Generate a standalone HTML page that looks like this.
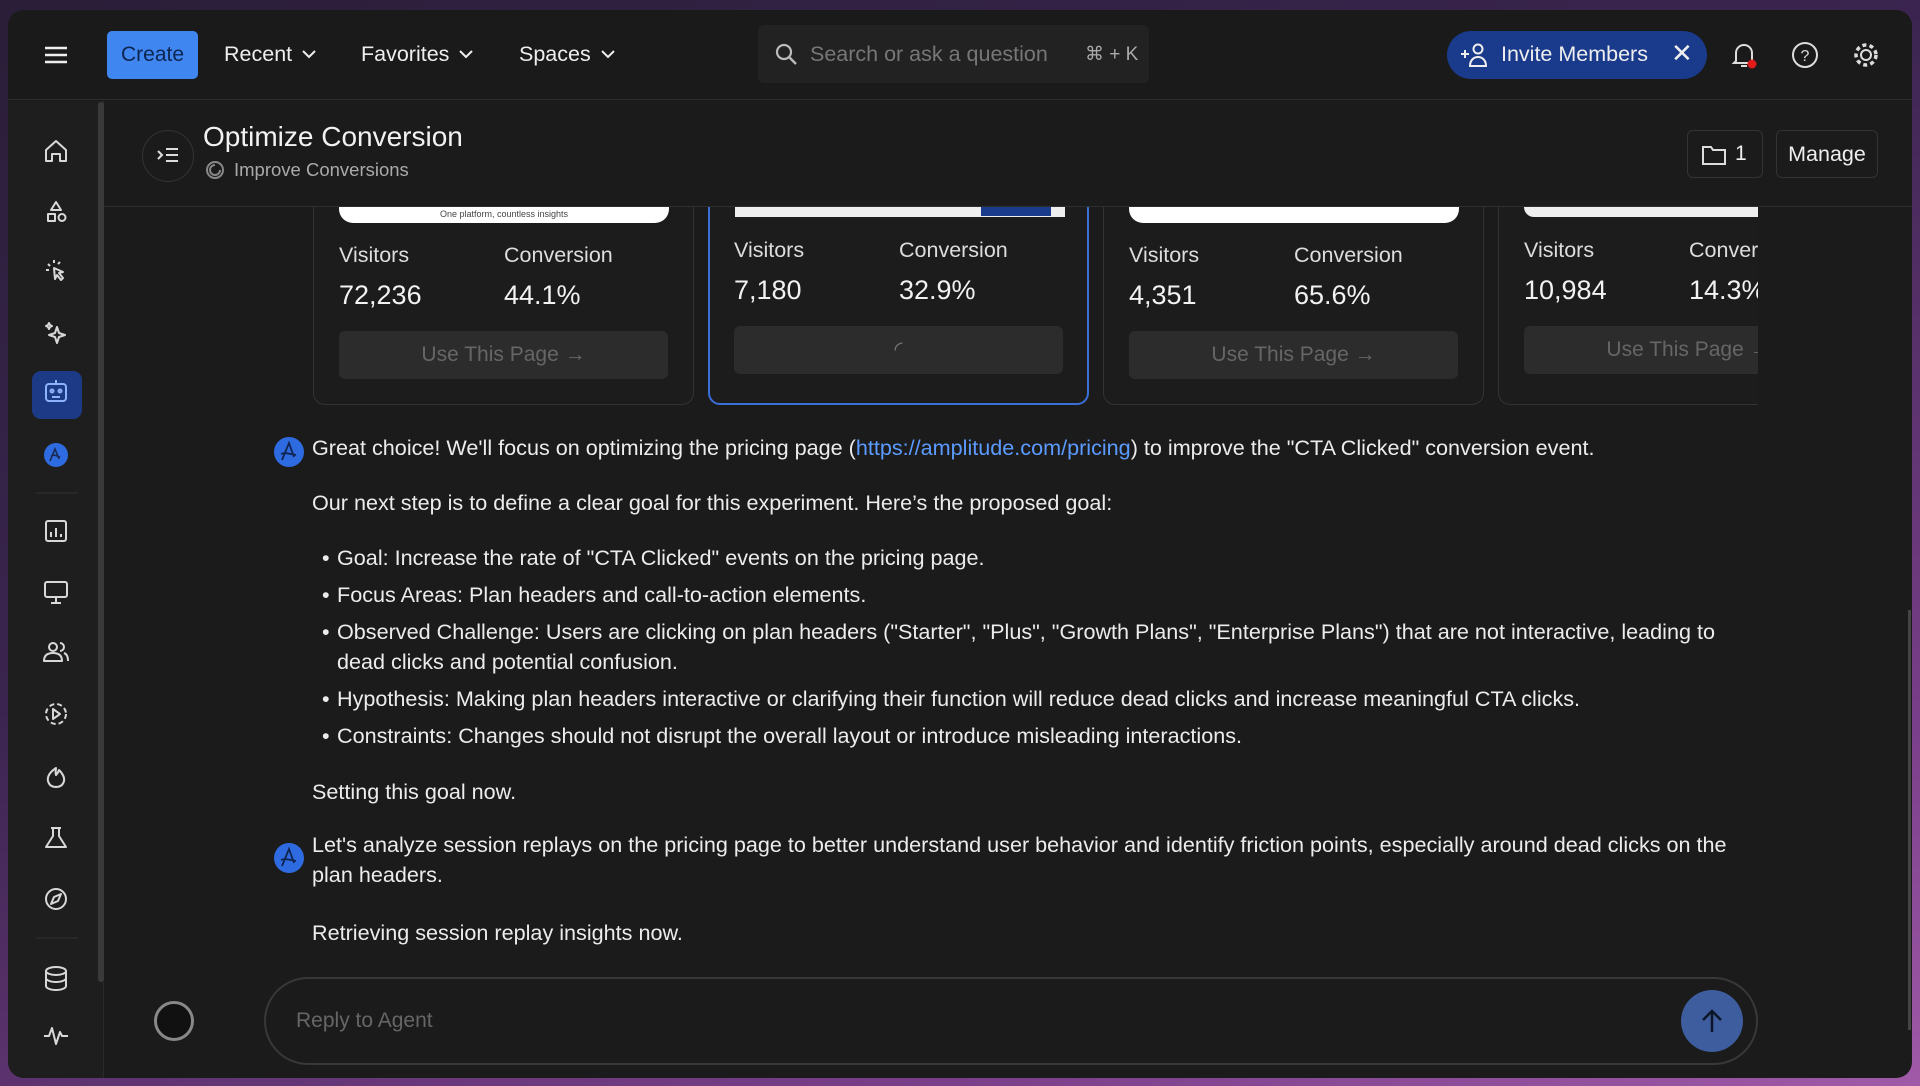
<!DOCTYPE html>
<html><head><meta charset="utf-8"><style>
*{box-sizing:border-box;margin:0;padding:0}
body{width:1920px;height:1086px;overflow:hidden;background:linear-gradient(160deg,#2a1e38 0%,#3b2550 40%,#7a3f8a 80%,#a05aa8 100%);font-family:"Liberation Sans",sans-serif;color:#e8e8e8;position:relative}
.win{position:absolute;left:8px;top:10px;width:1904px;height:1068px;background:#1b1b1b;border-radius:16px;overflow:hidden}
.a{position:absolute}
.top{left:0;top:0;width:1904px;height:90px;border-bottom:1px solid #2c2c2c;background:#1a1a1a}
.nav{font-size:21.5px;color:#eee;top:32px;display:flex;align-items:center;gap:10px}
.side{left:0;top:91px;width:96px;height:977px;background:#1e1e1e;border-right:1px solid #2a2a2a}
svg{display:block}
.card{border:1px solid #333;border-radius:12px;background:#1c1c1c}
.lbl{font-size:21.5px;color:#ddd}
.num{font-size:27px;color:#f2f2f2}
.btn{background:#2c2c2c;border-radius:6px;color:#666;font-size:21px;text-align:center;line-height:48px;height:48px}
.msg{font-size:21.6px;color:#ececec;left:304px}
.av{width:30px;height:30px;border-radius:50%;background:#2f6be0;left:266px}
</style></head><body>
<div class="win">
<div class="a top"></div>
<svg class="a" style="left:36px;top:35px" width="24" height="20"><g stroke="#eee" stroke-width="2.5"><line x1="1" y1="3" x2="23" y2="3"/><line x1="1" y1="10" x2="23" y2="10"/><line x1="1" y1="17" x2="23" y2="17"/></g></svg>
<div class="a" style="left:99px;top:21px;width:91px;height:48px;background:#3f86f0;border-radius:5px;color:#0e2550;font-size:21px;line-height:48px;text-align:center">Create</div>
<div class="a nav" style="left:216px">Recent <svg width="14" height="9"><path d="M1 1l6 6 6-6" stroke="#eee" stroke-width="2" fill="none"/></svg></div>
<div class="a nav" style="left:353px">Favorites <svg width="14" height="9"><path d="M1 1l6 6 6-6" stroke="#eee" stroke-width="2" fill="none"/></svg></div>
<div class="a nav" style="left:511px">Spaces <svg width="14" height="9"><path d="M1 1l6 6 6-6" stroke="#eee" stroke-width="2" fill="none"/></svg></div>
<div class="a" style="left:750px;top:15px;width:391px;height:58px;background:#222;border-radius:6px"></div>
<svg class="a" style="left:766px;top:32px" width="24" height="24"><circle cx="10" cy="10" r="7" stroke="#bbb" stroke-width="2.2" fill="none"/><line x1="15" y1="15" x2="22" y2="22" stroke="#bbb" stroke-width="2.4"/></svg>
<div class="a" style="left:802px;top:32px;font-size:21.5px;color:#777">Search or ask a question</div>
<div class="a" style="left:1077px;top:33px;font-size:19px;color:#aaa">⌘ + K</div>
<div class="a" style="left:1439px;top:21px;width:260px;height:48px;background:#1a3a8c;border-radius:24px"></div>
<svg class="a" style="left:1451px;top:32px" width="30" height="26"><g stroke="#eee" stroke-width="2" fill="none"><line x1="2" y1="12" x2="10" y2="12"/><line x1="6" y1="8" x2="6" y2="16"/><circle cx="19" cy="7" r="4.5"/><path d="M11 24c0-6 4-9 8-9s8 3 8 9z"/></g></svg>
<div class="a" style="left:1493px;top:32px;font-size:21.5px;color:#eee">Invite Members</div>
<div class="a" style="left:1663px;top:28px;font-size:26px;color:#eee">✕</div>
<svg class="a" style="left:1722px;top:31px" width="28" height="30"><path d="M6 20V12a8 8 0 0116 0v8l2 2H4z M11 25h6" stroke="#ddd" stroke-width="2" fill="none"/><circle cx="22" cy="23" r="4.5" fill="#e01b1b"/></svg>
<svg class="a" style="left:1783px;top:31px" width="28" height="28"><circle cx="14" cy="14" r="12" stroke="#ddd" stroke-width="2" fill="none"/><text x="14" y="20" font-size="16" fill="#ddd" text-anchor="middle" font-family="Liberation Sans">?</text></svg>
<svg class="a" style="left:1844px;top:31px" width="28" height="28"><circle cx="14" cy="14" r="5" stroke="#ddd" stroke-width="2" fill="none"/><circle cx="14" cy="14" r="10" stroke="#ddd" stroke-width="3.5" stroke-dasharray="4 3.2" fill="none"/></svg>

<div class="a side"></div>
<div class="a" style="left:90px;top:92px;width:6px;height:880px;background:#3a3a3a;border-radius:3px"></div>
<div class="a" style="left:24px;top:361px;width:50px;height:48px;border-radius:9px;background:#1d3a86"></div>
<svg class="a" style="left:0;top:0" width="96" height="1068">
<g stroke="#d8d8d8" stroke-width="2" fill="none" stroke-linejoin="round">
<path d="M38 140l10-9 10 9v11h-6v-7h-8v7h-6z"/>
<path d="M48 192l5 8h-10z"/><rect x="40" y="204" width="7" height="7"/><circle cx="54" cy="207.5" r="3.5"/>
<path d="M46 258l9 4-4 1 4 5-2 2-4-5-2 4z"/><path d="M40 254l2 2M46 250v3M52 252l-2 2M38 260h3"/>
<path d="M49 317l2 6 6 2-6 2-2 6-2-6-6-2 6-2z"/><path d="M41 313l1 2 2 1-2 1-1 2-1-2-2-1 2-1z"/>
<rect x="38" y="374" width="20" height="17" rx="3" stroke="#8fb2ff"/><circle cx="44" cy="381" r="1.5" stroke="#8fb2ff"/><circle cx="52" cy="381" r="1.5" stroke="#8fb2ff"/><path d="M48 370v4M44 387h8" stroke="#8fb2ff"/>
<rect x="38" y="511" width="20" height="20" rx="2"/><path d="M43 527v-5M48 527v-9M53 527v-3"/>
<rect x="37" y="572" width="22" height="15" rx="2"/><path d="M48 587v5M43 593h10"/>
<circle cx="45" cy="637" r="4"/><path d="M36 651c0-6 4-8 9-8s9 2 9 8zM52 633a4 4 0 010 8M56 643c3 1 4 4 4 8"/>
<circle cx="48" cy="704" r="10" stroke-dasharray="5 3"/><path d="M45 699v10l7-5z"/>
<path d="M48 758c-6 4-9 8-8 13 1 4 4 6 8 6s7-2 8-6c1-5-3-9-5-11-1 3-2 4-3 5-1-3 0-5 0-7z"/>
<path d="M43 818h10M45 818v8l-7 11h20l-7-11v-8"/>
<circle cx="48" cy="889" r="10"/><path d="M53 884l-3 7-7 3 3-7z"/>
<ellipse cx="48" cy="961" rx="10" ry="4"/><path d="M38 961v15c0 2 4 4 10 4s10-2 10-4v-15M38 968c0 2 4 4 10 4s10-2 10-4"/>
<path d="M36 1026h5l3-8 4 16 4-12 2 4h6"/>
</g>
<line x1="28" y1="483" x2="70" y2="483" stroke="#333"/><line x1="28" y1="928" x2="70" y2="928" stroke="#333"/>
<circle cx="48" cy="445" r="12" fill="#2f6be0"/><path d="M42 451l5-12 4 10M43 446c3-2 6 0 9 1" stroke="#1a2a50" stroke-width="1.6" fill="none"/>
</svg>

<div class="a" style="left:96px;top:91px;width:1808px;height:106px;border-bottom:1px solid #2e2e2e;background:#1b1b1b;z-index:2"></div>
<div class="a" style="left:134px;top:120px;width:52px;height:52px;border-radius:50%;border:1px solid #333;z-index:3"></div>
<svg class="a" style="left:149px;top:136px;z-index:3" width="22" height="20"><g stroke="#ddd" stroke-width="2" fill="none"><path d="M1 5l4 4-4 4"/><line x1="9" y1="3" x2="21" y2="3"/><line x1="9" y1="9" x2="21" y2="9"/><line x1="9" y1="15" x2="21" y2="15"/></g></svg>
<div class="a" style="left:195px;top:111px;font-size:28px;color:#f2f2f2;z-index:3">Optimize Conversion</div>
<svg class="a" style="left:197px;top:150px;z-index:3" width="20" height="20"><circle cx="10" cy="10" r="8" stroke="#888" stroke-width="2" fill="none"/><path d="M10 5a5 5 0 105 5" stroke="#888" stroke-width="2" fill="none"/></svg>
<div class="a" style="left:226px;top:149px;font-size:18.5px;color:#aaa;z-index:3">Improve Conversions</div>
<div class="a" style="left:1679px;top:120px;width:76px;height:48px;border:1px solid #333;border-radius:6px;z-index:3"></div>
<svg class="a" style="left:1693px;top:134px;z-index:3" width="26" height="22"><path d="M2 3h8l2 3h12v14H2z" stroke="#ddd" stroke-width="2" fill="none"/></svg>
<div class="a" style="left:1727px;top:132px;font-size:21px;color:#eee;z-index:3">1</div>
<div class="a" style="left:1768px;top:120px;width:102px;height:48px;border:1px solid #333;border-radius:6px;font-size:21.5px;line-height:46px;text-align:center;color:#eee;z-index:3">Manage</div>

<!-- cards -->
<div class="a card" style="left:305px;top:150px;width:381px;height:245px"></div>
<div class="a" style="left:331px;top:190px;width:330px;height:23px;background:#fff;border-radius:0 0 14px 14px;font-size:9px;color:#444;text-align:center;padding-top:9px;z-index:1">One platform, countless insights</div>
<div class="a lbl" style="left:331px;top:233px">Visitors</div><div class="a lbl" style="left:496px;top:233px">Conversion</div>
<div class="a num" style="left:331px;top:270px">72,236</div><div class="a num" style="left:496px;top:270px">44.1%</div>
<div class="a btn" style="left:331px;top:321px;width:329px">Use This Page →</div>

<div class="a card" style="left:700px;top:150px;width:381px;height:245px;border:2px solid #3a6fd8"></div>
<div class="a" style="left:727px;top:190px;width:330px;height:17px;background:#eee;z-index:1"><div style="position:absolute;right:14px;top:2px;width:70px;height:14px;background:#1a3a8c"></div></div>
<div class="a lbl" style="left:726px;top:228px">Visitors</div><div class="a lbl" style="left:891px;top:228px">Conversion</div>
<div class="a num" style="left:726px;top:265px">7,180</div><div class="a num" style="left:891px;top:265px">32.9%</div>
<div class="a btn" style="left:726px;top:316px;width:329px;color:#777">◜</div>

<div class="a card" style="left:1095px;top:150px;width:381px;height:245px"></div>
<div class="a" style="left:1121px;top:190px;width:330px;height:23px;background:#fff;border-radius:0 0 14px 14px;z-index:1"></div>
<div class="a lbl" style="left:1121px;top:233px">Visitors</div><div class="a lbl" style="left:1286px;top:233px">Conversion</div>
<div class="a num" style="left:1121px;top:270px">4,351</div><div class="a num" style="left:1286px;top:270px">65.6%</div>
<div class="a btn" style="left:1121px;top:321px;width:329px">Use This Page →</div>

<div class="a" style="left:1490px;top:150px;width:260px;height:245px;overflow:hidden">
<div class="a card" style="left:0;top:0;width:381px;height:245px"></div>
<div class="a" style="left:26px;top:40px;width:330px;height:17px;background:#eee;border-radius:0 0 10px 10px"></div>
<div class="a lbl" style="left:26px;top:78px">Visitors</div><div class="a lbl" style="left:191px;top:78px">Conversion</div>
<div class="a num" style="left:26px;top:115px">10,984</div><div class="a num" style="left:191px;top:115px">14.3%</div>
<div class="a btn" style="left:26px;top:166px;width:329px">Use This Page →</div>
</div>

<!-- messages -->
<div class="a av" style="top:427px"></div>
<svg class="a" style="left:266px;top:427px" width="30" height="30"><path d="M8 23l7-17 5 14M7 17c4-2 9 0 15 1" stroke="#0f2450" stroke-width="1.8" fill="none"/></svg>
<div class="a msg" style="top:425px">Great choice! We'll focus on optimizing the pricing page (<span style="color:#5b9bff">https://amplitude.com/pricing</span>) to improve the "CTA Clicked" conversion event.</div>
<div class="a msg" style="top:480px">Our next step is to define a clear goal for this experiment. Here’s the proposed goal:</div>
<div class="a msg" style="top:533px;left:314px;line-height:30px;width:1420px">
<div style="display:flex;margin-bottom:7px"><span style="width:15px;flex:none">•</span><span>Goal: Increase the rate of "CTA Clicked" events on the pricing page.</span></div>
<div style="display:flex;margin-bottom:7px"><span style="width:15px;flex:none">•</span><span>Focus Areas: Plan headers and call-to-action elements.</span></div>
<div style="display:flex;margin-bottom:7px"><span style="width:15px;flex:none">•</span><span>Observed Challenge: Users are clicking on plan headers ("Starter", "Plus", "Growth Plans", "Enterprise Plans") that are not interactive, leading to<br>dead clicks and potential confusion.</span></div>
<div style="display:flex;margin-bottom:7px"><span style="width:15px;flex:none">•</span><span>Hypothesis: Making plan headers interactive or clarifying their function will reduce dead clicks and increase meaningful CTA clicks.</span></div>
<div style="display:flex"><span style="width:15px;flex:none">•</span><span>Constraints: Changes should not disrupt the overall layout or introduce misleading interactions.</span></div>
</div>
<div class="a msg" style="top:769px">Setting this goal now.</div>
<div class="a av" style="top:833px"></div>
<svg class="a" style="left:266px;top:833px" width="30" height="30"><path d="M8 23l7-17 5 14M7 17c4-2 9 0 15 1" stroke="#0f2450" stroke-width="1.8" fill="none"/></svg>
<div class="a msg" style="top:820px;line-height:30px;width:1440px">Let's analyze session replays on the pricing page to better understand user behavior and identify friction points, especially around dead clicks on the<br>plan headers.</div>
<div class="a msg" style="top:910px">Retrieving session replay insights now.</div>

<div class="a" style="left:146px;top:991px;width:40px;height:40px;border-radius:50%;border:3px solid #888;background:#111"></div>
<div class="a" style="left:256px;top:967px;width:1494px;height:88px;border:2px solid #383838;border-radius:44px"></div>
<div class="a" style="left:288px;top:999px;font-size:21px;color:#666">Reply to Agent</div>
<div class="a" style="left:1673px;top:980px;width:62px;height:62px;border-radius:50%;background:#3d5d9e"></div>
<svg class="a" style="left:1690px;top:997px" width="28" height="28"><path d="M14 25V4M5 13l9-9 9 9" stroke="#0c1628" stroke-width="2.5" fill="none"/></svg>
<div class="a" style="left:1900px;top:600px;width:3px;height:420px;background:#444"></div>
</div>
</body></html>
